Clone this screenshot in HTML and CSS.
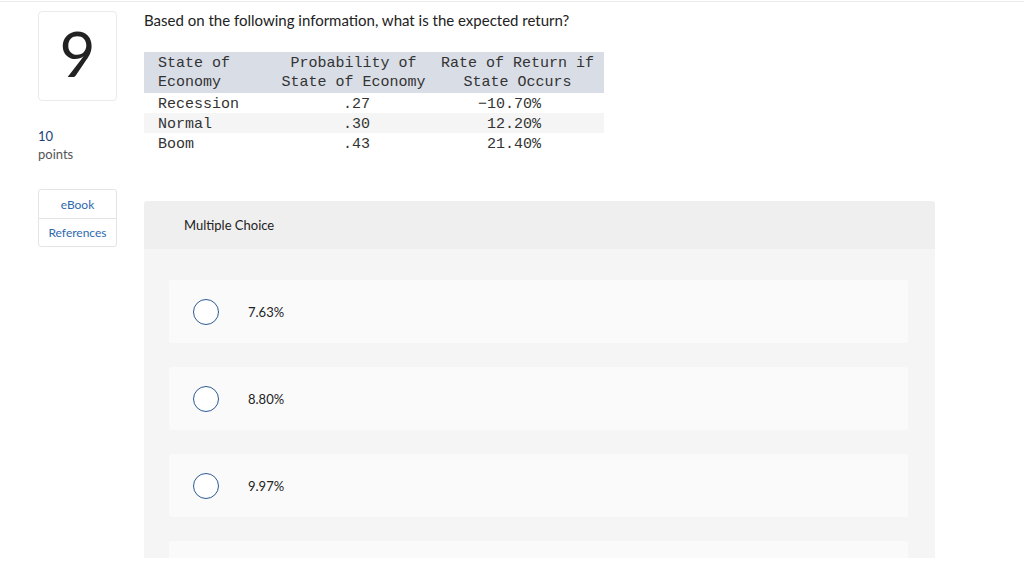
FILE: index.html
```html
<!DOCTYPE html>
<html>
<head>
<meta charset="utf-8">
<link rel="stylesheet" href="styles.css">
</head>
<body>
<div class="page">
  <aside class="side">
    <div class="qnum">9</div>
    <div class="points"><div class="pts-num">10</div><div class="pts-label">points</div></div>
    <div class="links">
      <div class="link">eBook</div>
      <div class="link">References</div>
    </div>
  </aside>
  <main class="content">
    <p class="question">Based on the following information, what is the expected return?</p>
    <table class="data">
      <colgroup><col class="c1"><col class="c2"><col class="c3"></colgroup>
      <thead>
        <tr><th class="l">State of<br>Economy</th><th>Probability of<br>State of Economy</th><th>Rate of Return if<br>State Occurs</th></tr>
      </thead>
      <tbody>
        <tr><td class="l">Recession</td><td>.27</td><td class="r">&minus;10.70%</td></tr>
        <tr class="alt"><td class="l">Normal</td><td>.30</td><td class="r">12.20%</td></tr>
        <tr><td class="l">Boom</td><td>.43</td><td class="r">21.40%</td></tr>
      </tbody>
    </table>
    <section class="mc">
      <div class="mc-head">Multiple Choice</div>
      <div class="mc-body">
        <div class="opt"><span class="radio"></span><span class="opt-text">7.63%</span></div>
        <div class="opt"><span class="radio"></span><span class="opt-text">8.80%</span></div>
        <div class="opt"><span class="radio"></span><span class="opt-text">9.97%</span></div>
        <div class="opt"></div>
      </div>
    </section>
  </main>
</div>
</body>
</html>
```
FILE: styles.css
```css
* { box-sizing: border-box; }
html, body { margin: 0; padding: 0; background: #fff; }
body {
  font-family: "Lato", "Open Sans", sans-serif;
  color: #222;
  height: 566px;
  overflow: hidden;
}
.page {
  display: flex;
  gap: 27px;
  padding: 0 0 0 38px;
  border-top: 1px solid #ececec;
  margin-top: 1px;
}
.side {
  width: 79px;
  flex: none;
  padding-top: 9px;
}
.qnum {
  height: 90px;
  border: 1px solid #ebebeb;
  border-radius: 4px;
  display: flex;
  align-items: center;
  justify-content: center;
  font-size: 62px;
  line-height: 1;
  color: #222;
  padding-bottom: 6px;
}
.points { margin-top: 26px; font-size: 13px; line-height: 18px; }
.pts-num { color: #1d3f7a; }
.pts-label { color: #555; }
.links {
  margin-top: 26px;
  border: 1px solid #e4e4e4;
  border-radius: 3px;
}
.link {
  height: 28px;
  display: flex;
  align-items: center;
  justify-content: center;
  font-size: 12px;
  color: #2f6aad;
}
.link + .link { border-top: 1px solid #e4e4e4; }
.content { width: 791px; flex: none; }
.question {
  margin: 8px 0 0;
  font-size: 15px;
  line-height: 20px;
  color: #222;
}
.data {
  margin-top: 22px;
  border-collapse: collapse;
  table-layout: fixed;
  width: 460px;
  font-family: "Liberation Mono", monospace;
  font-size: 15px;
  color: #333;
}
.c1 { width: 126px; }
.c2 { width: 167px; }
.c3 { width: 167px; }
.data th, .data td {
  font-weight: normal;
  height: 20.3px;
  line-height: 17.3px;
  padding: 3px 0 0;
  text-align: center;
  white-space: nowrap;
}
.data thead th { height: 40.6px; line-height: 19.3px; padding-top: 2px; }
.data thead tr { background: #d9dde6; }
.data .l { text-align: left; padding-left: 14px; }
.data td.r { text-align: right; padding-right: 63px; }
.data th:nth-child(3) { padding-right: 6px; }
.data td:nth-child(2) { padding-left: 6px; }
.data tr.alt { background: #f5f5f5; }
.mc {
  margin-top: 48px;
  border-radius: 3px 3px 0 0;
  overflow: hidden;
}
.mc-head {
  background: #efefef;
  height: 48px;
  padding-left: 40px;
  display: flex;
  align-items: center;
  font-size: 13px;
  color: #222;
}
.mc-body {
  background: #f5f5f5;
  height: 309px;
  overflow: hidden;
  padding: 31px 27px 0 25px;
  display: flex;
  flex-direction: column;
  gap: 24px;
}
.opt {
  flex: none;
  height: 63px;
  background: #fafafa;
  border-radius: 3px;
  display: flex;
  align-items: center;
  padding-left: 24px;
}
.radio {
  width: 26px;
  height: 26px;
  border: 1.5px solid #2b5a94;
  border-radius: 50%;
  background: #fff;
  flex: none;
}
.opt-text {
  margin-left: 29px;
  font-size: 13px;
  color: #222;
}
```
